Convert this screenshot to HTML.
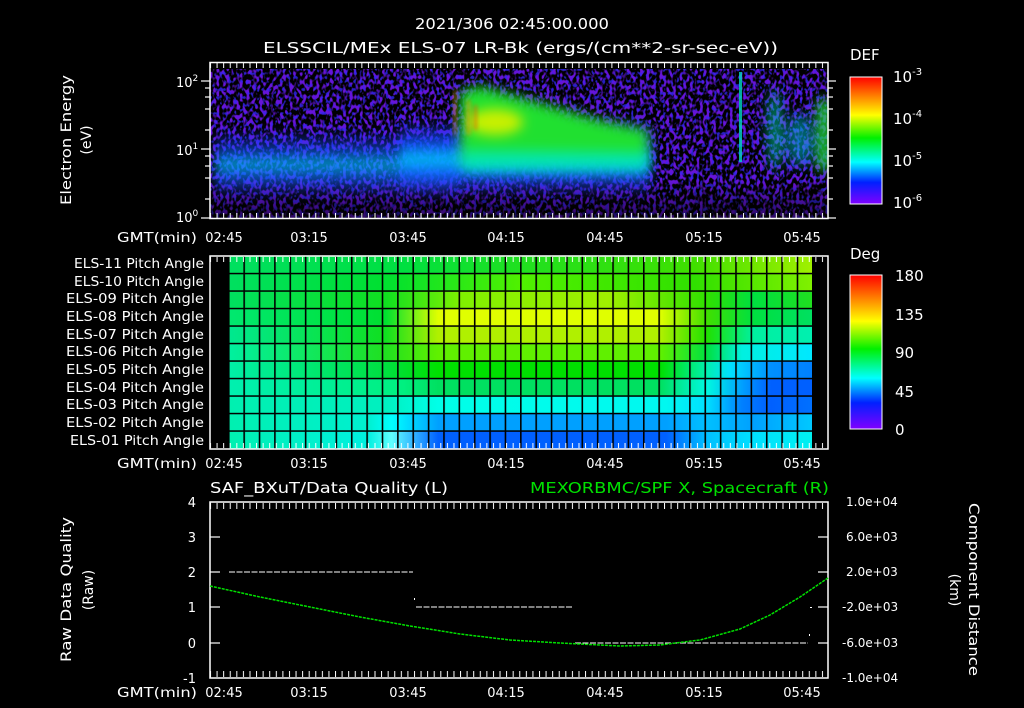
<!DOCTYPE html>
<html><head><meta charset="utf-8"><style>
html,body{margin:0;padding:0;background:#000;width:1024px;height:708px;overflow:hidden}
svg{display:block}
text{font-family:"DejaVu Sans","Liberation Sans",sans-serif;fill:#fff}
</style></head><body>
<svg width="1024" height="708" viewBox="0 0 1024 708" xmlns="http://www.w3.org/2000/svg">
<defs>
<filter id="nz" x="0" y="0" width="100%" height="100%" color-interpolation-filters="sRGB">
<feTurbulence type="fractalNoise" baseFrequency="0.3 0.2" numOctaves="1" seed="4"/>
<feColorMatrix values="0 0 0 0 0.4  0 0 0 0 0.08  0 0 0 0 0.85  7 0 0 0 -3.4"/>
</filter>
<filter id="nz2" x="0" y="0" width="100%" height="100%" color-interpolation-filters="sRGB">
<feTurbulence type="fractalNoise" baseFrequency="0.35 0.25" numOctaves="1" seed="11"/>
<feColorMatrix values="0 0 0 0 0.2  0 0 0 0 0.15  0 0 0 0 0.95  7 0 0 0 -3.8"/>
</filter>
<filter id="bl" x="-30%" y="-30%" width="160%" height="160%" color-interpolation-filters="sRGB"><feGaussianBlur stdDeviation="6"/></filter>
<filter id="bl2" x="-100%" y="-30%" width="300%" height="160%" color-interpolation-filters="sRGB"><feGaussianBlur stdDeviation="2"/></filter>
<filter id="bl3" x="-10%" y="-50%" width="120%" height="200%" color-interpolation-filters="sRGB"><feGaussianBlur stdDeviation="5"/></filter>
<linearGradient id="band" x1="0" y1="0" x2="0" y2="1">
<stop offset="0" stop-color="#2030ff" stop-opacity="0"/>
<stop offset="0.3" stop-color="#1050ff" stop-opacity="0.7"/>
<stop offset="0.5" stop-color="#00c8ff" stop-opacity="0.9"/>
<stop offset="0.7" stop-color="#1060ff" stop-opacity="0.8"/>
<stop offset="1" stop-color="#3020e0" stop-opacity="0"/>
</linearGradient>
<linearGradient id="dk" x1="0" y1="0" x2="0" y2="1">
<stop offset="0" stop-color="#000" stop-opacity="0"/>
<stop offset="1" stop-color="#000" stop-opacity="0.55"/>
</linearGradient>
<linearGradient id="cb" x1="0" y1="0" x2="0" y2="1">
<stop offset="0" stop-color="#ff0000"/>
<stop offset="0.15" stop-color="#ff8000"/>
<stop offset="0.3" stop-color="#ffff00"/>
<stop offset="0.48" stop-color="#00f000"/>
<stop offset="0.67" stop-color="#00ffff"/>
<stop offset="0.83" stop-color="#0020ff"/>
<stop offset="1" stop-color="#8000ff"/>
</linearGradient>
<pattern id="tk" x="210" y="0" width="6.58" height="10" patternUnits="userSpaceOnUse"><rect x="0" y="0" width="1" height="10" fill="#fff"/></pattern>
<pattern id="vg" x="228" y="0" width="15.37" height="10" patternUnits="userSpaceOnUse"><rect x="0" y="0" width="1.6" height="10" fill="#000"/></pattern>
</defs>

<text x="415" y="29" font-size="15" textLength="194" lengthAdjust="spacingAndGlyphs">2021/306 02:45:00.000</text>
<text x="263" y="53" font-size="15" textLength="515" lengthAdjust="spacingAndGlyphs">ELSSCIL/MEx ELS-07 LR-Bk  (ergs/(cm**2-sr-sec-eV))</text>

<!-- top spectrogram -->
<rect x="210" y="69" width="618" height="150" fill="#000"/>
<rect x="210" y="69" width="618" height="150" filter="url(#nz)"/>
<rect x="210" y="69" width="618" height="150" filter="url(#nz2)" opacity="0.8"/>
<rect x="210" y="180" width="618" height="39" fill="url(#dk)"/>
<g filter="url(#bl3)">
<rect x="215" y="128" width="240" height="72" fill="url(#band)" opacity="0.8"/>
<rect x="400" y="118" width="60" height="80" fill="url(#band)" opacity="0.9"/>
<rect x="455" y="120" width="195" height="78" fill="url(#band)"/>
</g>
<g filter="url(#bl)">
<polygon points="460,92 480,86 520,97 600,120 648,130 648,162 460,164" fill="#20e030"/>
<polygon points="462,150 648,152 648,172 462,172" fill="#00e8c0" opacity="0.8"/>
<ellipse cx="495" cy="122" rx="28" ry="13" fill="#c8f000"/>
</g>
<rect x="454" y="90" width="2" height="45" fill="#ff8000" opacity="0.7" filter="url(#bl2)"/>
<rect x="467" y="100" width="3" height="35" fill="#ff9000" opacity="0.7" filter="url(#bl2)"/>
<rect x="474" y="105" width="3" height="25" fill="#ff4000" opacity="0.6" filter="url(#bl2)"/>
<rect x="739" y="72" width="3" height="90" fill="#00d8c0" opacity="0.8"/>
<g filter="url(#bl)">
<ellipse cx="775" cy="130" rx="7" ry="40" fill="#00e0b0" opacity="0.6"/>
<ellipse cx="800" cy="140" rx="14" ry="26" fill="#00c8e0" opacity="0.5"/>
<rect x="818" y="100" width="12" height="70" fill="#20e040"/>
</g>
<rect x="0" y="0" width="209" height="240" fill="#000"/>
<rect x="829" y="60" width="20" height="170" fill="#000"/>
<rect x="210" y="62.5" width="618" height="156" fill="none" stroke="#fff" stroke-width="1.5"/>
<rect x="210" y="63" width="618" height="5" fill="url(#tk)"/>
<rect x="210" y="213" width="618" height="5" fill="url(#tk)"/>
<g stroke="#fff" stroke-width="1.2">
<line x1="201" y1="81" x2="210" y2="81"/><line x1="201" y1="149" x2="210" y2="149"/><line x1="201" y1="218" x2="210" y2="218"/>
<line x1="205" y1="88" x2="210" y2="88"/><line x1="205" y1="97" x2="210" y2="97"/><line x1="205" y1="109" x2="210" y2="109"/><line x1="205" y1="130" x2="210" y2="130"/><line x1="205" y1="156" x2="210" y2="156"/><line x1="205" y1="166" x2="210" y2="166"/><line x1="205" y1="178" x2="210" y2="178"/><line x1="205" y1="199" x2="210" y2="199"/>
<line x1="828" y1="81" x2="836" y2="81"/><line x1="828" y1="149" x2="836" y2="149"/><line x1="828" y1="218" x2="836" y2="218"/>
<line x1="828" y1="88" x2="833" y2="88"/><line x1="828" y1="97" x2="833" y2="97"/><line x1="828" y1="109" x2="833" y2="109"/><line x1="828" y1="130" x2="833" y2="130"/><line x1="828" y1="156" x2="833" y2="156"/><line x1="828" y1="166" x2="833" y2="166"/><line x1="828" y1="178" x2="833" y2="178"/><line x1="828" y1="199" x2="833" y2="199"/>
</g>
<text x="176" y="87" font-size="13">10<tspan font-size="9" dy="-6">2</tspan></text>
<text x="176" y="155" font-size="13">10<tspan font-size="9" dy="-6">1</tspan></text>
<text x="176" y="222" font-size="13">10<tspan font-size="9" dy="-6">0</tspan></text>
<text transform="translate(71,205) rotate(-90)" font-size="14" textLength="130" lengthAdjust="spacingAndGlyphs">Electron Energy</text>
<text transform="translate(91,140) rotate(-90)" font-size="14" text-anchor="middle">(eV)</text>
<g font-size="13">
<text x="117" y="242" textLength="80" lengthAdjust="spacingAndGlyphs">GMT(min)</text>
<text x="224" y="242" text-anchor="middle">02:45</text><text x="309" y="242" text-anchor="middle">03:15</text><text x="408" y="242" text-anchor="middle">03:45</text><text x="506" y="242" text-anchor="middle">04:15</text><text x="605" y="242" text-anchor="middle">04:45</text><text x="704" y="242" text-anchor="middle">05:15</text><text x="802" y="242" text-anchor="middle">05:45</text>
</g>
<text x="850" y="60" font-size="15">DEF</text>
<rect x="850" y="77" width="32" height="127" fill="url(#cb)" stroke="#fff" stroke-width="1"/>
<g font-size="15"><text x="893" y="82">10<tspan font-size="10" dy="-7">-3</tspan></text>
<text x="893" y="124">10<tspan font-size="10" dy="-7">-4</tspan></text>
<text x="893" y="166">10<tspan font-size="10" dy="-7">-5</tspan></text>
<text x="893" y="208">10<tspan font-size="10" dy="-7">-6</tspan></text></g>

<!-- middle pitch angle grid -->
<rect x="210" y="256" width="618" height="193" fill="#000"/>
<defs>
<linearGradient id="r1"><stop offset="0" stop-color="#00e060"/><stop offset=".3" stop-color="#00e040"/><stop offset=".5" stop-color="#20e020"/><stop offset=".8" stop-color="#40e000"/><stop offset="1" stop-color="#a0f000"/></linearGradient>
<linearGradient id="r2"><stop offset="0" stop-color="#00e060"/><stop offset=".27" stop-color="#00e030"/><stop offset=".5" stop-color="#50f000"/><stop offset=".8" stop-color="#30e000"/><stop offset="1" stop-color="#80f000"/></linearGradient>
<linearGradient id="r3"><stop offset="0" stop-color="#00e060"/><stop offset=".27" stop-color="#10e020"/><stop offset=".4" stop-color="#80f000"/><stop offset=".65" stop-color="#a0f000"/><stop offset=".82" stop-color="#30e000"/><stop offset=".9" stop-color="#00e040"/><stop offset="1" stop-color="#20e020"/></linearGradient>
<linearGradient id="r4"><stop offset="0" stop-color="#00e870"/><stop offset=".27" stop-color="#00e030"/><stop offset=".36" stop-color="#e0ff00"/><stop offset=".74" stop-color="#e0ff00"/><stop offset=".82" stop-color="#40e000"/><stop offset=".9" stop-color="#00e040"/><stop offset="1" stop-color="#00e060"/></linearGradient>
<linearGradient id="r5"><stop offset="0" stop-color="#00e890"/><stop offset=".27" stop-color="#10e020"/><stop offset=".36" stop-color="#b0f000"/><stop offset=".74" stop-color="#b0f000"/><stop offset=".82" stop-color="#20e000"/><stop offset=".9" stop-color="#00f0a0"/><stop offset="1" stop-color="#00f0b0"/></linearGradient>
<linearGradient id="r6"><stop offset="0" stop-color="#00f0a0"/><stop offset=".27" stop-color="#20e020"/><stop offset=".36" stop-color="#60f000"/><stop offset=".74" stop-color="#60f000"/><stop offset=".82" stop-color="#00e040"/><stop offset=".88" stop-color="#00f0e0"/><stop offset="1" stop-color="#00e8ff"/></linearGradient>
<linearGradient id="r7"><stop offset="0" stop-color="#00f0a8"/><stop offset=".27" stop-color="#00e040"/><stop offset=".36" stop-color="#00e000"/><stop offset=".74" stop-color="#00e000"/><stop offset=".82" stop-color="#00f0b0"/><stop offset=".86" stop-color="#00e0ff"/><stop offset=".93" stop-color="#0090ff"/><stop offset="1" stop-color="#0080ff"/></linearGradient>
<linearGradient id="r8"><stop offset="0" stop-color="#00f0b0"/><stop offset=".3" stop-color="#00f080"/><stop offset=".36" stop-color="#00e060"/><stop offset=".74" stop-color="#00e060"/><stop offset=".82" stop-color="#00f8e0"/><stop offset=".88" stop-color="#00a0ff"/><stop offset=".93" stop-color="#0060ff"/><stop offset="1" stop-color="#0060ff"/></linearGradient>
<linearGradient id="r9"><stop offset="0" stop-color="#00f0b0"/><stop offset=".27" stop-color="#00f0c0"/><stop offset=".36" stop-color="#00ffe8"/><stop offset=".75" stop-color="#00f8f0"/><stop offset=".82" stop-color="#00e0ff"/><stop offset=".88" stop-color="#0080ff"/><stop offset=".93" stop-color="#0060ff"/><stop offset="1" stop-color="#0070ff"/></linearGradient>
<linearGradient id="r10"><stop offset="0" stop-color="#00f0b0"/><stop offset=".24" stop-color="#00f0d0"/><stop offset=".28" stop-color="#00ffff"/><stop offset=".36" stop-color="#00a0ff"/><stop offset=".75" stop-color="#00a0ff"/><stop offset=".82" stop-color="#00c0ff"/><stop offset=".9" stop-color="#00a0ff"/><stop offset="1" stop-color="#00c8ff"/></linearGradient>
<linearGradient id="r11"><stop offset="0" stop-color="#00f0b0"/><stop offset=".24" stop-color="#00f0e0"/><stop offset=".28" stop-color="#60ffff"/><stop offset=".36" stop-color="#0060ff"/><stop offset=".75" stop-color="#0060ff"/><stop offset=".82" stop-color="#00c0ff"/><stop offset=".9" stop-color="#00e0ff"/><stop offset="1" stop-color="#00f0f0"/></linearGradient>
</defs>
<rect x="228" y="256" width="584" height="18" fill="url(#r1)"/>
<rect x="228" y="273.5" width="584" height="18" fill="url(#r2)"/>
<rect x="228" y="291" width="584" height="18" fill="url(#r3)"/>
<rect x="228" y="308.5" width="584" height="18" fill="url(#r4)"/>
<rect x="228" y="326" width="584" height="18" fill="url(#r5)"/>
<rect x="228" y="343.5" width="584" height="18" fill="url(#r6)"/>
<rect x="228" y="361" width="584" height="18" fill="url(#r7)"/>
<rect x="228" y="378.5" width="584" height="18" fill="url(#r8)"/>
<rect x="228" y="396" width="584" height="18" fill="url(#r9)"/>
<rect x="228" y="413.5" width="584" height="18" fill="url(#r10)"/>
<rect x="228" y="431" width="584" height="18" fill="url(#r11)"/>
<rect x="228" y="256" width="586" height="193" fill="url(#vg)"/>
<g fill="#000">
<rect x="228" y="272.8" width="584" height="1.5"/><rect x="228" y="290.3" width="584" height="1.5"/><rect x="228" y="307.8" width="584" height="1.5"/><rect x="228" y="325.3" width="584" height="1.5"/><rect x="228" y="342.8" width="584" height="1.5"/><rect x="228" y="360.3" width="584" height="1.5"/><rect x="228" y="377.8" width="584" height="1.5"/><rect x="228" y="395.3" width="584" height="1.5"/><rect x="228" y="412.8" width="584" height="1.5"/><rect x="228" y="430.3" width="584" height="1.5"/>
</g>
<rect x="210" y="256" width="618" height="193" fill="none" stroke="#fff" stroke-width="1.5"/>
<rect x="210" y="257" width="618" height="5" fill="url(#tk)"/>
<rect x="210" y="443" width="618" height="5" fill="url(#tk)"/>
<g font-size="13">
<text x="74" y="268" textLength="130" lengthAdjust="spacingAndGlyphs">ELS-11 Pitch Angle</text><text x="74" y="286" textLength="130" lengthAdjust="spacingAndGlyphs">ELS-10 Pitch Angle</text><text x="66" y="303" textLength="138" lengthAdjust="spacingAndGlyphs">ELS-09 Pitch Angle</text><text x="66" y="321" textLength="138" lengthAdjust="spacingAndGlyphs">ELS-08 Pitch Angle</text><text x="66" y="339" textLength="138" lengthAdjust="spacingAndGlyphs">ELS-07 Pitch Angle</text><text x="66" y="356" textLength="138" lengthAdjust="spacingAndGlyphs">ELS-06 Pitch Angle</text><text x="66" y="374" textLength="138" lengthAdjust="spacingAndGlyphs">ELS-05 Pitch Angle</text><text x="66" y="392" textLength="138" lengthAdjust="spacingAndGlyphs">ELS-04 Pitch Angle</text><text x="66" y="409" textLength="138" lengthAdjust="spacingAndGlyphs">ELS-03 Pitch Angle</text><text x="66" y="427" textLength="138" lengthAdjust="spacingAndGlyphs">ELS-02 Pitch Angle</text><text x="70" y="445" textLength="134" lengthAdjust="spacingAndGlyphs">ELS-01 Pitch Angle</text>
</g>
<g font-size="13">
<text x="117" y="468" textLength="80" lengthAdjust="spacingAndGlyphs">GMT(min)</text>
<text x="224" y="468" text-anchor="middle">02:45</text><text x="309" y="468" text-anchor="middle">03:15</text><text x="408" y="468" text-anchor="middle">03:45</text><text x="506" y="468" text-anchor="middle">04:15</text><text x="605" y="468" text-anchor="middle">04:45</text><text x="704" y="468" text-anchor="middle">05:15</text><text x="802" y="468" text-anchor="middle">05:45</text>
</g>
<text x="850" y="259" font-size="15">Deg</text>
<rect x="850" y="275" width="32" height="154" fill="url(#cb)" stroke="#fff" stroke-width="1"/>
<g font-size="15"><text x="895" y="281">180</text><text x="895" y="320">135</text><text x="895" y="358">90</text><text x="895" y="397">45</text><text x="895" y="435">0</text></g>

<!-- bottom plot -->
<text x="210" y="493" font-size="15" textLength="238" lengthAdjust="spacingAndGlyphs">SAF_BXuT/Data Quality (L)</text>
<text x="530" y="493" font-size="15" textLength="299" lengthAdjust="spacingAndGlyphs" style="fill:#00e000">MEXORBMC/SPF X, Spacecraft (R)</text>
<rect x="210" y="502" width="618" height="176" fill="none" stroke="#fff" stroke-width="1.5"/>
<rect x="210" y="503" width="618" height="6" fill="url(#tk)"/>
<rect x="210" y="671" width="618" height="6" fill="url(#tk)"/>
<g stroke="#fff" stroke-width="1.2">
<line x1="210" y1="537" x2="220" y2="537"/><line x1="210" y1="572" x2="220" y2="572"/><line x1="210" y1="607" x2="220" y2="607"/><line x1="210" y1="643" x2="220" y2="643"/>
<line x1="818" y1="537" x2="828" y2="537"/><line x1="818" y1="572" x2="828" y2="572"/><line x1="818" y1="607" x2="828" y2="607"/><line x1="818" y1="643" x2="828" y2="643"/>
</g>
<g stroke="#fff" stroke-width="1" stroke-dasharray="6 1.5">
<line x1="229" y1="572" x2="413" y2="572"/>
<line x1="416" y1="607" x2="572" y2="607"/>
<line x1="575" y1="643" x2="808" y2="643"/>
</g>
<rect x="414" y="598" width="1" height="2" fill="#fff"/><rect x="810" y="607" width="2" height="1" fill="#fff"/><rect x="809" y="634" width="1" height="2" fill="#fff"/>
<polyline points="210,586 260,597 310,607 360,617 410,626 460,634 510,640 560,643 620,646 660,645 700,640 740,629 770,615 800,597 828,578" fill="none" stroke="#00e000" stroke-width="1.5" stroke-dasharray="3 1"/>
<g font-size="13" text-anchor="end">
<text x="196" y="507">4</text><text x="196" y="542">3</text><text x="196" y="577">2</text><text x="196" y="612">1</text><text x="196" y="648">0</text><text x="196" y="683">-1</text>
</g>
<g font-size="12">
<text x="846" y="506">1.0e+04</text><text x="846" y="541">6.0e+03</text><text x="846" y="576">2.0e+03</text><text x="842" y="611">-2.0e+03</text><text x="842" y="647">-6.0e+03</text><text x="842" y="682">-1.0e+04</text>
</g>
<text transform="translate(71,662) rotate(-90)" font-size="14" textLength="145" lengthAdjust="spacingAndGlyphs">Raw Data Quality</text>
<text transform="translate(93,590) rotate(-90)" font-size="14" text-anchor="middle">(Raw)</text>
<text transform="translate(969,503) rotate(90)" font-size="14" textLength="173" lengthAdjust="spacingAndGlyphs">Component Distance</text>
<text transform="translate(950,590) rotate(90)" font-size="14" text-anchor="middle">(km)</text>
<g font-size="13">
<text x="117" y="697" textLength="80" lengthAdjust="spacingAndGlyphs">GMT(min)</text>
<text x="224" y="697" text-anchor="middle">02:45</text><text x="309" y="697" text-anchor="middle">03:15</text><text x="408" y="697" text-anchor="middle">03:45</text><text x="506" y="697" text-anchor="middle">04:15</text><text x="605" y="697" text-anchor="middle">04:45</text><text x="704" y="697" text-anchor="middle">05:15</text><text x="802" y="697" text-anchor="middle">05:45</text>
</g>
</svg>
</body></html>
